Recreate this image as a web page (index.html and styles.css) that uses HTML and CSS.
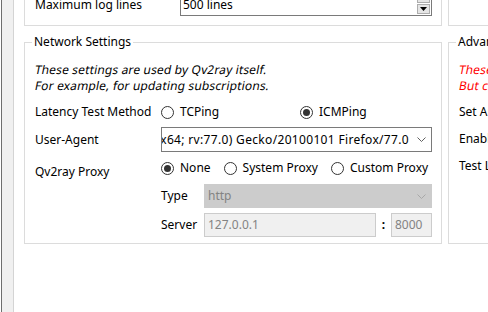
FILE: index.html
```html
<!DOCTYPE html>
<html lang="en">
<head>
    <meta charset="UTF-8">
    <meta name="viewport" content="width=device-width, initial-scale=1.0">
    <title>Preferences</title>
    <link rel="stylesheet" href="styles.css">
</head>
<body>
    <div class="window">
        <div class="sidebar"></div>
        <div class="content">
            <div class="group topGroup">
                <div class="logRow">
                    <span class="logLabel">Maximum log lines</span>
                    <div class="spinBox">
                        <span>500 lines</span>
                        <div class="spinButtons">
                            <div class="spinBtn"><svg width="7" height="4" viewBox="0 0 7 4"><path d="M0 4 L3.5 0 L7 4 Z" fill="#000"/></svg></div>
                            <div class="spinBtn"><svg width="7" height="4" viewBox="0 0 7 4"><path d="M0 0 L3.5 4 L7 0 Z" fill="#000"/></svg></div>
                        </div>
                    </div>
                </div>
            </div>
            <div class="group topGroup"></div>

            <fieldset class="groupBox">
                <legend>Network Settings</legend>
                <div class="note">
                    <span class="slant">These settings are used by Qv2ray itself.</span>
                    <span class="slant">For example, for updating subscriptions.</span>
                </div>

                <div class="formRow latencyRow">
                    <span class="formLabel">Latency Test Method</span>
                    <div class="radioGroup">
                        <label class="radioOpt wideOpt"><span class="radio"></span>TCPing</label>
                        <label class="radioOpt"><span class="radio checked"></span>ICMPing</label>
                    </div>
                </div>

                <div class="formRow uaRow">
                    <span class="formLabel">User-Agent</span>
                    <div class="combo">
                        <div class="comboText"><span>x64; rv:77.0) Gecko/20100101 Firefox/77.0</span></div>
                        <svg class="chevron" width="9" height="5" viewBox="0 0 9 5"><polyline points="0.5,0.5 4.5,4.5 8.5,0.5" fill="none" stroke="#606060" stroke-width="1"/></svg>
                    </div>
                </div>

                <div class="formRow proxyRow">
                    <span class="formLabel proxyLabel">Qv2ray Proxy</span>
                    <div class="proxyBody">
                        <div class="radioGroup proxyRadios">
                            <label class="radioOpt"><span class="radio checked"></span>None</label>
                            <label class="radioOpt"><span class="radio"></span>System Proxy</label>
                            <label class="radioOpt"><span class="radio"></span>Custom Proxy</label>
                        </div>
                        <div class="subRow typeRow">
                            <span class="subLabel">Type</span>
                            <div class="combo disabled">
                                <div class="comboText left"><span>http</span></div>
                                <svg class="chevron" width="9" height="5" viewBox="0 0 9 5"><polyline points="0.5,0.5 4.5,4.5 8.5,0.5" fill="none" stroke="#a8a8a8" stroke-width="1"/></svg>
                            </div>
                        </div>
                        <div class="subRow serverRow">
                            <span class="subLabel">Server</span>
                            <div class="lineEdit hostEdit">127.0.0.1</div>
                            <span class="colon">:</span>
                            <div class="lineEdit portEdit">8000</div>
                        </div>
                    </div>
                </div>
            </fieldset>

            <fieldset class="groupBox advGroup">
                <legend>Advanced Settings</legend>
                <div class="note red">
                    <span class="slant">These settings are for advanced users only.</span>
                    <span class="slant">But changing them may break things.</span>
                </div>
                <div class="advRow firstAdv">Set AutoConnect to last connected</div>
                <div class="advRow">Enable Latency Test on startup</div>
                <div class="advRow">Test Latency Periodically</div>
            </fieldset>
        </div>
    </div>
</body>
</html>
```

FILE: styles.css
```css
body {
    margin: 0;
    background: #fff;
    font-family: 'Noto Sans', 'Liberation Sans', sans-serif;
    font-size: 12px;
    line-height: 16px;
    color: #000;
    overflow: hidden;
}

.window {
    display: flex;
    height: 312px;
    width: 488px;
    overflow: hidden;
}

.sidebar {
    flex: none;
    margin-left: 1px;
    width: 11px;
    background: #f0f0f0;
    border-left: 1px solid #6e6e6e;
    border-right: 1px solid #d4d4d4;
}

.content {
    flex: none;
    padding-left: 10px;
    display: grid;
    grid-template-columns: 418px 220px;
    grid-template-rows: auto auto;
    column-gap: 6px;
    row-gap: 8px;
    align-content: start;
}

.group {
    border: 1px solid #dcdcdc;
}

.topGroup {
    margin-top: -20px;
    height: 24px;
    padding: 11px 9px 9px 10px;
}

.logRow {
    display: flex;
    align-items: center;
    height: 24px;
}

.logLabel {
    width: 145px;
    flex: none;
    padding-top: 2px;
}

.spinBox {
    box-sizing: border-box;
    width: 252px;
    height: 24px;
    border: 1px solid #7a7a7a;
    display: flex;
    align-items: center;
    justify-content: space-between;
    padding-left: 2px;
}

.spinBox span {
    padding-top: 2px;
}

.spinButtons {
    display: flex;
    flex-direction: column;
    gap: 1px;
    margin-right: 1px;
    margin-top: -1px;
}

.spinBtn {
    width: 13px;
    height: 10px;
    background: #e5e5e5;
    border: 1px solid #adadad;
    box-sizing: border-box;
    display: flex;
    align-items: center;
    justify-content: center;
}

.groupBox {
    margin: 0;
    padding: 0 9px 6px 10px;
    border: 1px solid #dcdcdc;
    min-width: 0;
}

.groupBox legend {
    margin-left: -3px;
    padding: 0 2px;
    line-height: 16px;
}

.note {
    margin-top: 12px;
    line-height: 16px;
    white-space: nowrap;
}

.slant {
    display: block;
    height: 16px;
    transform: skewX(-11deg);
    transform-origin: center;
    letter-spacing: 0.15px;
}

.red {
    color: #ff0000;
}

.formRow {
    display: flex;
}

.formLabel {
    width: 126px;
    flex: none;
}

.latencyRow {
    margin-top: 8px;
    height: 20px;
    align-items: center;
}

.radioGroup {
    display: flex;
    align-items: center;
}

.radioOpt {
    display: flex;
    align-items: center;
    gap: 6px;
}

.wideOpt {
    width: 139px;
}

.radio {
    box-sizing: border-box;
    width: 13px;
    height: 13px;
    border: 1px solid #333;
    border-radius: 50%;
    background: #fff;
    display: flex;
    align-items: center;
    justify-content: center;
    flex: none;
}

.radio.checked::after {
    content: "";
    width: 7px;
    height: 7px;
    border-radius: 50%;
    background: #333;
}

.uaRow {
    margin-top: 5px;
    align-items: center;
}

.combo {
    box-sizing: border-box;
    flex: 1;
    height: 25px;
    border: 1px solid #7a7a7a;
    display: flex;
    align-items: center;
    min-width: 0;
}

.comboText {
    flex: 1;
    min-width: 0;
    overflow: hidden;
    display: flex;
    justify-content: flex-end;
    white-space: nowrap;
    padding-right: 8px;
    letter-spacing: 0.33px;
}

.comboText.left {
    justify-content: flex-start;
    padding-left: 3px;
    letter-spacing: 0;
}

.chevron {
    flex: none;
    margin-right: 5px;
}

.combo.disabled {
    height: 24px;
    background: #cccccc;
    border-color: #cccccc;
    color: #838383;
}

.proxyRow {
    margin-top: 6px;
}

.proxyLabel {
    padding-top: 6px;
}

.proxyBody {
    flex: 1;
    display: flex;
    flex-direction: column;
}

.proxyRadios {
    height: 20px;
    gap: 13px;
}

.subRow {
    display: flex;
    align-items: center;
}

.typeRow {
    margin-top: 6px;
}

.serverRow {
    margin-top: 5px;
}

.subLabel {
    width: 43px;
    flex: none;
}

.lineEdit {
    box-sizing: border-box;
    height: 24px;
    background: #f0f0f0;
    border: 1px solid #cccccc;
    color: #838383;
    padding-left: 3px;
    display: flex;
    align-items: center;
}

.hostEdit {
    width: 172px;
}

.colon {
    width: 15px;
    text-align: center;
    font-weight: bold;
}

.portEdit {
    flex: 1;
}

.advGroup {
    white-space: nowrap;
}

.advRow {
    margin-top: 11px;
}

.firstAdv {
    margin-top: 10px;
}
```
